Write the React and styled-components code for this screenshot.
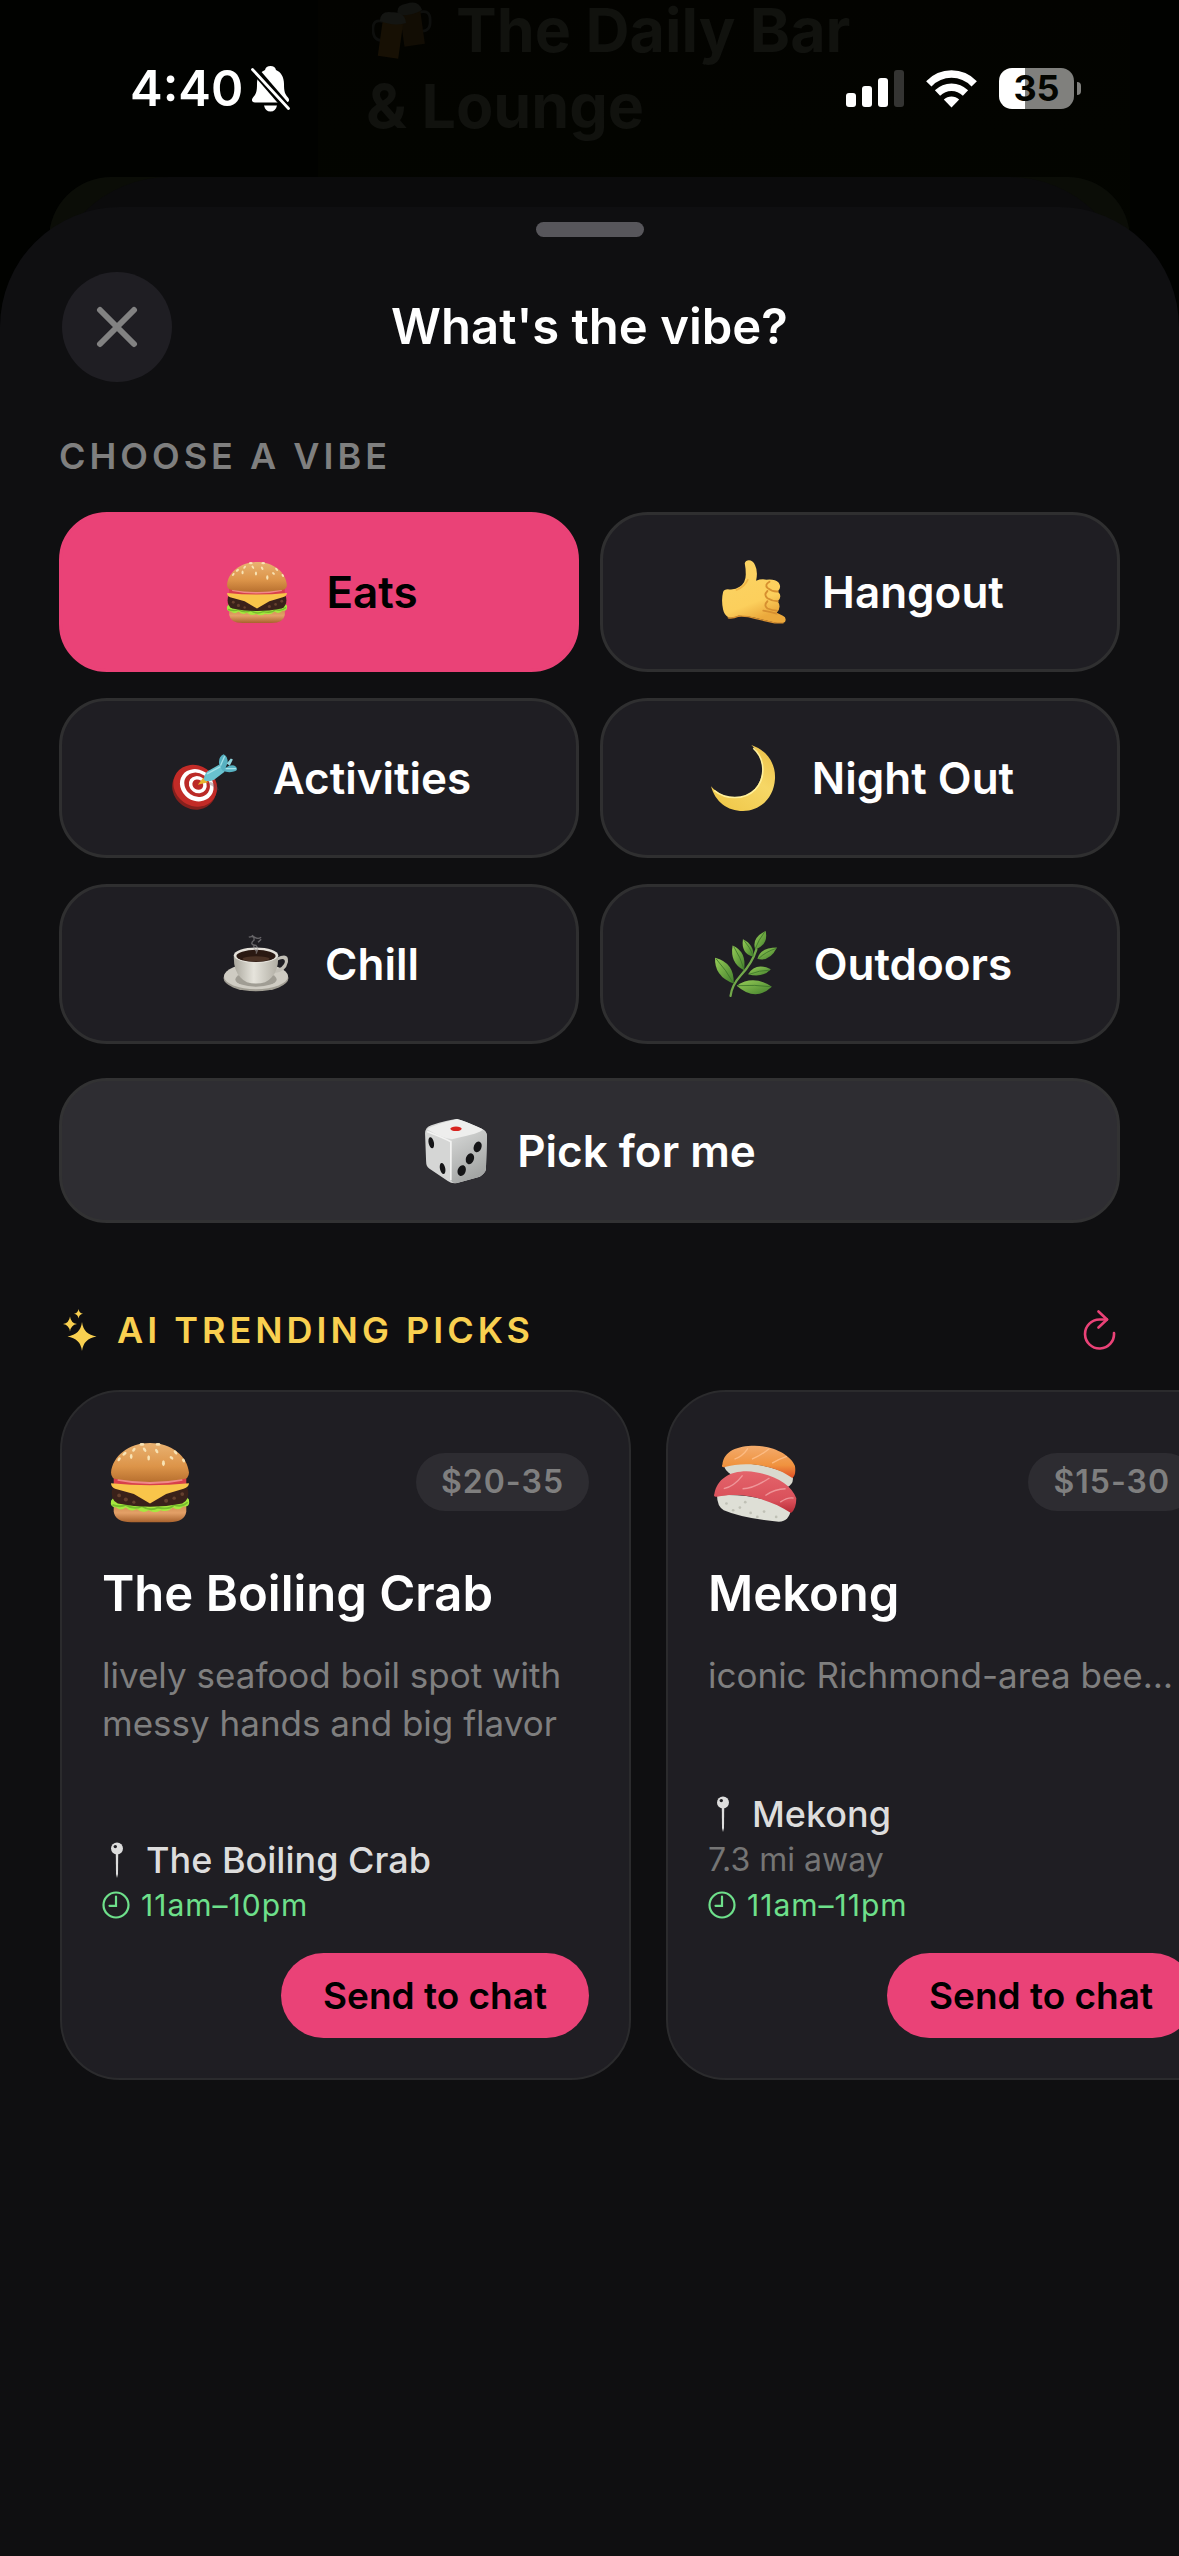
import React from "react";
import styled, { createGlobalStyle } from "styled-components";

const color = {
  sheet: "#0f0f11",
  surface: "#1f1e23",
  raised: "#2e2d32",
  line: "#2f2f30",
  pink: "#ea4277",
  gold: "#f9d050",
  green: "#6ee08b",
  muted: "#7f7f7f",
  soft: "#dddddd",
};

const GlobalStyle = createGlobalStyle`
  *, *::before, *::after { box-sizing: border-box; }
  body {
    margin: 0;
    background: #000;
    color: #fff;
    font-family: Inter, "Liberation Sans", sans-serif;
    -webkit-font-smoothing: antialiased;
  }
  h1, h2, h3, p, ul { margin: 0; padding: 0; }
  button { font: inherit; border: 0; padding: 0; cursor: pointer; color: inherit; }
  svg { display: block; flex: none; }
`;

/* ---------- page shell ---------- */

const Screen = styled.div`
  position: relative;
  display: flex;
  flex-direction: column;
  min-height: 100vh;
  overflow: hidden;
  background: #010200;
`;

const Behind = styled.div`
  position: absolute;
  inset: 0 49px auto 318px;
  display: flex;
  flex-direction: column;
  gap: 16px;
  height: 260px;
  padding-left: 48px;
  background: linear-gradient(#030300, #030500);
  color: #11120e;
  font-size: 61px;
  line-height: 60px;
  font-weight: 700;
`;

const BehindLine = styled.div`
  display: flex;
  align-items: center;
  gap: 24px;
  white-space: nowrap;
  svg { margin-left: 6px; }
`;

const StatusBar = styled.header`
  position: relative;
  display: flex;
  justify-content: space-between;
  align-items: center;
  height: 177px;
  padding: 0 98px 0 130px;
`;

const StatusGroup = styled.div`
  display: flex;
  align-items: center;
  gap: ${(p) => p.$gap}px;
`;

const Clock = styled.time`
  font-size: 49px;
  line-height: 60px;
  font-weight: 600;
`;

const Battery = styled.div`
  display: flex;
  align-items: center;
  gap: 3px;
  &::after {
    content: "";
    width: 4px;
    height: 13px;
    border-radius: 0 6px 6px 0;
    background: #80807d;
  }
`;

const BatteryBody = styled.div`
  width: 75px;
  height: 41px;
  border-radius: 13px;
  background: linear-gradient(90deg, #fff 35%, #80807d 35%);
  color: #040500;
  font-size: 36px;
  line-height: 41px;
  font-weight: 700;
  text-align: center;
`;

const Stack = styled.div`
  position: relative;
  flex: 1;
  display: flex;
  padding-top: 30px;
`;

const Peek = styled.div`
  position: absolute;
  top: 0;
  left: ${(p) => p.$inset}px;
  right: ${(p) => p.$inset}px;
  height: 180px;
  border-radius: ${(p) => p.$radius}px ${(p) => p.$radius}px 0 0;
  background: ${(p) => p.$tone};
`;

const Sheet = styled.main`
  position: relative;
  flex: 1;
  min-width: 0;
  display: flex;
  flex-direction: column;
  padding-top: 15px;
  border-radius: 120px 120px 0 0;
  background: ${color.sheet};
`;

const Handle = styled.div`
  align-self: center;
  width: 108px;
  height: 15px;
  border-radius: 8px;
  background: #57565b;
`;

const TitleBar = styled.div`
  display: grid;
  grid-template-columns: 110px 1fr 110px;
  align-items: center;
  margin: 35px 62px 52px;
`;

const CloseButton = styled.button`
  display: grid;
  place-items: center;
  width: 110px;
  height: 110px;
  border-radius: 50%;
  background: ${color.surface};
`;

const Title = styled.h1`
  font-size: 49px;
  line-height: 60px;
  font-weight: 600;
  text-align: center;
`;

/* ---------- vibes ---------- */

const Section = styled.section`
  display: flex;
  flex-direction: column;
  padding: 0 59px;
`;

const SectionLabel = styled.h2`
  display: flex;
  align-items: center;
  gap: 20px;
  color: ${(p) => p.$tone};
  font-size: 36px;
  line-height: 44px;
  font-weight: 600;
  letter-spacing: 4px;
`;

const VibeGrid = styled.div`
  display: grid;
  grid-template-columns: 1fr 1fr;
  gap: 26px 21px;
  margin: 34px 0;
`;

const VibeButton = styled.button`
  display: flex;
  justify-content: center;
  align-items: center;
  gap: ${(p) => (p.$wide ? 28 : 36)}px;
  height: ${(p) => (p.$wide ? 145 : 160)}px;
  padding-left: ${(p) => (p.$wide ? 0 : 4)}px;
  border: 3px solid ${(p) => (p.$selected ? color.pink : p.$wide ? "#323233" : color.line)};
  border-radius: 48px;
  background: ${(p) => (p.$selected ? color.pink : p.$wide ? color.raised : color.surface)};
  color: ${(p) => (p.$selected ? "#000" : "#fff")};
  font-size: 44px;
  line-height: 56px;
  font-weight: 600;
`;

/* ---------- picks ---------- */

const PicksHeader = styled.div`
  display: flex;
  justify-content: space-between;
  align-items: center;
  margin: 85px 63px 38px;
`;

const IconButton = styled.button`
  display: grid;
  place-items: center;
  height: 44px;
  background: none;
`;

const Carousel = styled.ul`
  display: flex;
  gap: 35px;
  padding: 0 60px;
  overflow-x: auto;
  scrollbar-width: none;
  list-style: none;
`;

const Card = styled.li`
  flex: 0 0 571px;
  display: flex;
  flex-direction: column;
  min-height: 690px;
  padding: 40px;
  border: 2px solid #2b2b2d;
  border-radius: 60px;
  background: ${color.surface};
`;

const CardTop = styled.div`
  display: flex;
  justify-content: space-between;
  align-items: center;
  height: 100px;
  padding-left: 5px;
`;

const Price = styled.span`
  padding: 0 25px;
  border-radius: 29px;
  background: #2d2c31;
  color: ${color.muted};
  font-size: 32px;
  line-height: 58px;
  font-weight: 600;
  letter-spacing: 1px;
`;

const CardTitle = styled.h3`
  margin-top: 32px;
  font-size: 49px;
  line-height: 60px;
  font-weight: 600;
`;

const Blurb = styled.p`
  margin-top: 27px;
  color: ${color.muted};
  font-size: 35px;
  line-height: 48px;
  white-space: pre;
`;

const Meta = styled.div`
  margin-top: auto;
  margin-bottom: 26px;
`;

const Venue = styled.p`
  display: flex;
  align-items: center;
  gap: 23px;
  padding-left: 9px;
  color: ${color.soft};
  font-size: 36px;
  line-height: 46px;
  font-weight: 500;
`;

const Distance = styled.p`
  color: #757575;
  font-size: 32px;
  line-height: 46px;
`;

const Hours = styled.p`
  display: flex;
  align-items: center;
  gap: 11px;
  color: ${color.green};
  font-size: 30px;
  line-height: 44px;
  letter-spacing: 1px;
`;

const SendButton = styled.button`
  align-self: flex-end;
  height: 85px;
  padding: 0 42px;
  border-radius: 43px;
  background: ${color.pink};
  color: #000;
  font-size: 37px;
  line-height: 44px;
  font-weight: 600;
`;

/* ---------- drawings ---------- */

const Art = ({ size = 66, box = 64, children, ...rest }) => (
  <svg width={size} height={size} viewBox={`0 0 ${box} ${box}`} aria-hidden="true" {...rest}>
    {children}
  </svg>
);

const Burger = ({ size }) => (
  <Art size={size}>
    <defs>
      <linearGradient id="bun" x1="0" y1="0" x2="0" y2="1">
        <stop offset="0" stopColor="#e9b271" />
        <stop offset=".6" stopColor="#dc9449" />
        <stop offset="1" stopColor="#b8702f" />
      </linearGradient>
      <linearGradient id="heel" x1="0" y1="0" x2="0" y2="1">
        <stop offset="0" stopColor="#cf8a50" />
        <stop offset=".5" stopColor="#e3a067" />
        <stop offset="1" stopColor="#a9632d" />
      </linearGradient>
    </defs>
    <path d="M5 48H59V54Q58 62 46 62H18Q6 62 5 54Z" fill="url(#heel)" />
    <path d="M3 46Q2 51 7 51Q10 54 14 51Q18 55 22 52Q27 56 31 53Q36 56 40 53Q45 55 49 51Q53 54 57 50Q62 51 61 45L57 41H7Z" fill="#a6e83f" />
    <path d="M4 49Q10 51 14 49Q20 53 26 50Q32 54 38 51Q46 53 50 49Q56 51 60 47" fill="none" stroke="#76bd2c" strokeWidth="1.4" />
    <path d="M4 36H60Q62 45 56 48Q32 53 8 48Q2 45 4 36Z" fill="#3a211a" />
    <g fill="#65402e">
      <circle cx="9" cy="42" r="1.4" /><circle cx="14" cy="45" r="1.5" /><circle cx="20" cy="47" r="1.2" />
      <circle cx="44" cy="46" r="1.5" /><circle cx="50" cy="44" r="1.3" /><circle cx="56" cy="41" r="1.4" />
    </g>
    <path d="M5 27H59V34Q32 39 5 34Z" fill="#d8404b" />
    <path d="M8 30Q32 35 56 30" fill="none" stroke="#f08a88" strokeWidth="2" />
    <path d="M3 33Q32 36 61 33Q61 36 57 37L44 41L32 48L20 41L6 37Q3 36 3 33Z" fill="#f9c54a" />
    <path d="M32 3C48 3 60 13 61 25Q61 30 56 30Q32 34 8 30Q3 30 3 25C4 13 16 3 32 3Z" fill="url(#bun)" />
    <g fill="#f8e3b4">
      <ellipse cx="26" cy="4" rx="1.8" ry="1" /><ellipse cx="38" cy="4" rx="1.8" ry="1" />
      <ellipse cx="28" cy="8" rx="1" ry="1.8" transform="rotate(-35 28 8)" />
      <ellipse cx="37" cy="9" rx="1" ry="1.8" transform="rotate(-30 37 9)" />
      <ellipse cx="20" cy="8" rx="1" ry="1.7" transform="rotate(35 20 8)" />
      <ellipse cx="13" cy="11" rx="1" ry="1.8" transform="rotate(50 13 11)" />
      <ellipse cx="18" cy="13" rx="1" ry="1.8" /><ellipse cx="31" cy="14" rx="1" ry="2" />
      <ellipse cx="42" cy="18" rx="1.1" ry="2.2" /><ellipse cx="51" cy="10" rx="1" ry="1.8" transform="rotate(-40 51 10)" />
      <ellipse cx="9" cy="15" rx="1" ry="1.6" transform="rotate(35 9 15)" />
      <ellipse cx="48" cy="14" rx="1" ry="1.6" transform="rotate(-50 48 14)" />
      <ellipse cx="57" cy="16" rx="1" ry="1.6" transform="rotate(-30 57 16)" />
    </g>
  </Art>
);

const Shaka = () => (
  <Art>
    <defs>
      <linearGradient id="hand" x1="0" y1="0" x2=".4" y2="1">
        <stop offset="0" stopColor="#fbd465" />
        <stop offset=".75" stopColor="#fccf5c" />
        <stop offset="1" stopColor="#eba93c" />
      </linearGradient>
    </defs>
    <path d="M24 4C25 0 32 0 34 6Q37 12 35 21Q40 19 45 20Q53 19 57 23Q60 28 56 31.500Q61 36 56 41Q60 47 55 52L61 55Q65 57 63 61Q60 63 53 61.500L34 57Q26 55 18 55Q12 58 8 56.500Q4 54 3 49Q1 40 3 32Q4 29 9 29.500Q15 30 19 27Q25 23 25 15Q25 9 24 4Z" fill="url(#hand)" />
    <g fill="none" stroke="#d68f30" strokeWidth="1.800" strokeLinecap="round">
      <path d="M48 22Q43 25 46 28Q51 32 56 31.500" />
      <path d="M46 31Q42 35 46 38Q51 41 56 41" />
      <path d="M46 41Q42 45 46 48Q51 50 55 50" />
      <path d="M42 50Q48 51 55 53" />
      <path d="M8 57Q12 58 18 55.500Q26 55 34 57.500L53 62H61" strokeWidth="1.300" />
      <path d="M27 20Q24 27 16 30" stroke="#eeb345" strokeWidth="1.500" />
    </g>
  </Art>
);

const Dart = () => (
  <Art>
    <ellipse cx="22.500" cy="42" rx="22" ry="20" transform="rotate(35 22.500 42)" fill="#85201d" />
    <ellipse cx="23.500" cy="39.500" rx="22" ry="19.500" transform="rotate(35 23.500 39.500)" fill="#c22b27" />
    <g transform="rotate(35 25 39)">
      <ellipse cx="25" cy="39" rx="17" ry="15" fill="#fff" />
      <ellipse cx="25" cy="38.500" rx="13" ry="11.200" fill="#bb2a27" />
      <ellipse cx="25.500" cy="38" rx="9" ry="8" fill="#fff" />
      <ellipse cx="25.500" cy="38" rx="5.500" ry="4.800" fill="#bb2a27" />
    </g>
    <path d="M37 37Q43 38 45 44" fill="none" stroke="#6d3d48" strokeWidth="3" opacity=".35" />
    <path d="M26 38.500L31 32L36 36Z" fill="#e9b52f" />
    <path d="M32 32Q33 26 38 24L47 19L52 26L44 32Q40 36 36 35Q31 35 32 32Z" fill="#69c2cf" />
    <path d="M47 20Q45 12 51 9Q55 11 55 17L53 22Q59 18 63 21Q66 25 60 26Q55 27 50 25Z" fill="#57b1c1" />
    <path d="M54 18L58 13L60 14L57 20Z" fill="#8fd3dc" />
    <path d="M35 28L48 21M48 20L52 11M53 23L63 23" stroke="#a5e3e9" strokeWidth="1.200" />
  </Art>
);

const Moon = () => (
  <Art>
    <defs>
      <linearGradient id="moon" x1="1" y1="0" x2=".3" y2="1">
        <stop offset="0" stopColor="#ecbf45" />
        <stop offset=".5" stopColor="#f6d766" />
        <stop offset="1" stopColor="#f0c94c" />
      </linearGradient>
    </defs>
    <path d="M40 0C55 5 64 18 63 33C62 51 49 64 32 64C17 64 5 55 1 40C13 54 33 55 44 42C54 30 53 12 40 0Z" fill="url(#moon)" />
    <path d="M42 3C54 14 54 32 44 43C33 54 15 53 4 44" fill="none" stroke="#fff09a" strokeWidth="1.5" />
  </Art>
);

const Cup = () => (
  <Art>
    <defs>
      <linearGradient id="china" x1="0" y1="0" x2="1" y2="0">
        <stop offset="0" stopColor="#aaa79d" />
        <stop offset=".45" stopColor="#e6e4dc" />
        <stop offset="1" stopColor="#b0ada3" />
      </linearGradient>
    </defs>
    <ellipse cx="32" cy="45.500" rx="31.500" ry="13" fill="#a19e94" />
    <ellipse cx="32" cy="44" rx="31" ry="12.500" fill="#cfccc3" />
    <ellipse cx="32" cy="47" rx="20" ry="7" fill="#a09d94" />
    <path d="M52 26Q64 20 63 30Q61 40 49 41L50 38Q59 35 60 30Q60 25 52 29Z" fill="#c2bfb6" />
    <path d="M10.500 24Q10 38 17 45Q22 51 32 51Q42 51 47 45Q54 38 53.500 24Z" fill="url(#china)" />
    <ellipse cx="32" cy="23.500" rx="21.500" ry="7.500" fill="#e4e1da" />
    <ellipse cx="32" cy="24.200" rx="19" ry="5.900" fill="#2a1912" />
    <ellipse cx="32" cy="27" rx="13" ry="2.600" fill="#4a3225" />
    <path d="M25 6Q31 4 30 9Q25 13 32 14Q35 17 32 22M28 4Q33 9 37 6M30 13Q29 17 33 20M34 11L37 8" fill="none" stroke="#a2a0a2" strokeWidth="1.300" opacity=".55" />
  </Art>
);

const Herb = () => (
  <Art>
    <defs>
      <linearGradient id="leaf" x1="0" y1="0" x2="1" y2="1">
        <stop offset="0" stopColor="#97ce58" />
        <stop offset="1" stopColor="#427f2c" />
      </linearGradient>
    </defs>
    <path d="M18 63Q19 53 28 43Q39 31 43 18" fill="none" stroke="#72a94a" strokeWidth="2.200" strokeLinecap="round" />
    <g fill="url(#leaf)">
      <path d="M52 0Q55 13 42 18Q38 7 52 0Z" /><path d="M30 8Q41 13 40 25Q28 22 30 8Z" />
      <path d="M63 16Q56 30 44 27Q47 16 63 16Z" /><path d="M20 14Q34 20 31 38Q17 31 20 14Z" />
      <path d="M57 37Q49 46 35 42Q42 30 57 37Z" /><path d="M3 26Q22 31 21 51Q2 44 3 26Z" />
      <path d="M58 54Q42 69 24 53Q40 42 58 54Z" />
    </g>
    <g fill="none" stroke="#3c7429" strokeWidth=".8">
      <path d="M4 27Q14 38 21 51M21 15Q28 26 31 37M31 9Q37 16 40 24M51 1Q45 9 42 17M62 17Q52 20 45 27M56 38Q46 38 36 42M57 54Q42 52 25 53" />
    </g>
  </Art>
);

const Die = () => (
  <Art>
    <defs>
      <linearGradient id="dieRight" x1="0" y1="0" x2=".4" y2="1">
        <stop offset="0" stopColor="#d8d9d8" />
        <stop offset="1" stopColor="#a3a5a4" />
      </linearGradient>
    </defs>
    <path d="M33 1Q38 2 58 11Q62 13 62 18L61 50Q60 54 55 57L33 63Q28 64 24 61L6 49Q3 47 3 42L2 15Q2 9 8 7Q24 2 33 1Z" fill="#d5d6d5" />
    <path d="M28 22Q30 19 36 18L58 12Q62 13 62 18L61 50Q60 54 55 57L33 63Q27 64 27 58Z" fill="url(#dieRight)" />
    <path d="M4 11Q9 7 33 1Q44 4 58 11Q56 15 30 20Q22 22 4 11Z" fill="#eeeeed" />
    <path d="M4 13Q22 20 27 23L27 60" fill="none" stroke="#f3f3f2" strokeWidth="1.600" />
    <ellipse cx="32" cy="10.500" rx="5.500" ry="2.200" fill="#d8241f" />
    <g fill="#151517">
      <ellipse cx="8" cy="24" rx="2.600" ry="5.400" transform="rotate(-12 8 24)" />
      <ellipse cx="19" cy="49" rx="2.600" ry="5.400" transform="rotate(-12 19 49)" />
      <ellipse cx="53" cy="28" rx="3.700" ry="5.400" transform="rotate(20 53 28)" />
      <ellipse cx="45.500" cy="39.500" rx="3.900" ry="5.400" transform="rotate(20 45.500 39.500)" />
      <ellipse cx="37.500" cy="51" rx="3.900" ry="5.400" transform="rotate(20 37.500 51)" />
    </g>
  </Art>
);

const Sushi = ({ size }) => (
  <Art size={size}>
    <defs>
      <linearGradient id="salmon" x1="0" y1="0" x2="0" y2="1">
        <stop offset="0" stopColor="#f3ab6c" />
        <stop offset=".6" stopColor="#f0933f" />
        <stop offset="1" stopColor="#df4f24" />
      </linearGradient>
      <linearGradient id="tuna" x1="0" y1="0" x2="0" y2="1">
        <stop offset="0" stopColor="#e4646b" />
        <stop offset=".7" stopColor="#d9505a" />
        <stop offset="1" stopColor="#b82c37" />
      </linearGradient>
    </defs>
    <path d="M8 19Q32 15 59 27Q61 33 55 36L20 29Q9 26 8 19Z" fill="#d9d9ce" />
    <path d="M7 19C8 9 18 5 31 5C45 5 58 12 61 20Q62 27 59 29C47 20 26 16 8 21Q6 21 7 19Z" fill="url(#salmon)" />
    <path d="M3 42Q32 40 58 52Q57 61 49 61.500Q22 59 8 53Q3 50 3 42Z" fill="#dedfd6" />
    <g fill="#bfc0b5">
      <circle cx="10" cy="48" r="1" /><circle cx="20" cy="51" r="1" /><circle cx="28" cy="55" r="1" />
      <circle cx="38" cy="54" r="1" /><circle cx="47" cy="58" r="1" /><circle cx="15" cy="53" r="1" />
      <circle cx="33" cy="58" r="1" /><circle cx="24" cy="47" r="1" /><circle cx="50" cy="34" r="1" />
    </g>
    <path d="M1 41C3 30 12 24 25 24C43 25 58 33 62 44Q62 52 58 55C43 45 22 39 3 43Q0 43 1 41Z" fill="url(#tuna)" />
    <g fill="none" stroke="#ffc28d" strokeWidth="1" opacity=".8">
      <path d="M16 15Q22 13 26 7M29 15Q36 12 42 7M44 18Q49 15 55 13" />
    </g>
    <g fill="none" stroke="#f3a5a8" strokeWidth="1" opacity=".8">
      <path d="M8 37Q16 35 22 27M22 37Q30 37 42 29M39 42Q46 37 54 37M50 47Q56 43 60 44" />
    </g>
  </Art>
);

const Beers = () => (
  <Art size={60}>
    <g transform="rotate(-8 46 30)">
      <path d="M52 14Q65 12 63 24Q62 36 52 34" fill="none" stroke="#0e0f0d" strokeWidth="3" />
      <path d="M32 12H54V48H32Z" fill="#120d04" />
      <path d="M30 14Q28 3 40 3Q54 0 56 12Q45 17 30 14Z" fill="#121310" />
    </g>
    <g transform="rotate(8 18 40)">
      <path d="M10 24Q-2 22 0 34Q2 46 12 44" fill="none" stroke="#0e0f0d" strokeWidth="3" />
      <path d="M9 24H31V61H9Z" fill="#171004" />
      <path d="M6 24Q5 13 17 13Q31 10 34 22Q22 28 6 24Z" fill="#141512" />
    </g>
  </Art>
);

const BellOff = () => (
  <svg width="39" height="46" viewBox="0 0 39 46" aria-hidden="true">
    <defs>
      <mask id="slash">
        <rect width="39" height="46" fill="#fff" />
        <path d="M1 1L39 45" stroke="#000" strokeWidth="8" />
      </mask>
    </defs>
    <g fill="#fff" mask="url(#slash)">
      <path d="M19.500 0C22.500 0 24.500 1.500 25 4C30 6 33 11 33 18C33 26 34 28 37 31.500C39 34 38 36.500 35 36.500H4C1 36.500 0 34 2 31.500C5 28 6 26 6 18C6 11 9 6 14 4C14.500 1.500 16.500 0 19.500 0Z" />
      <path d="M13 39.500H26C25 43.500 23 45.500 19.500 45.500C16 45.500 14 43.500 13 39.500Z" />
    </g>
    <path d="M1.500 3.500L37.500 42.500" stroke="#fff" strokeWidth="2.800" strokeLinecap="round" />
  </svg>
);

const Signal = () => (
  <svg width="58" height="38" viewBox="0 0 58 38" aria-hidden="true">
    <rect x="0" y="23" width="10" height="14" rx="3" fill="#fff" />
    <rect x="16" y="16" width="10" height="21" rx="3" fill="#fff" />
    <rect x="32" y="8" width="10" height="29" rx="3" fill="#fff" />
    <rect x="48" y="0" width="10" height="37" rx="3" fill="#343432" />
  </svg>
);

const Wifi = () => (
  <svg width="51" height="38" viewBox="0 0 51 38" aria-hidden="true">
    <g fill="none" stroke="#fff" strokeWidth="7.500">
      <path d="M2.800 13.800C15.500 .8 35.500 .8 48.200 13.800" />
      <path d="M11.500 23C19.500 15.200 31.500 15.200 39.500 23" />
    </g>
    <path d="M17.800 29.500C22 25.500 29 25.500 33.200 29.500L25.500 37.500Z" fill="#fff" />
  </svg>
);

const Cross = () => (
  <svg width="42" height="42" viewBox="0 0 42 42" aria-hidden="true">
    <path d="M4 4L38 38M38 4L4 38" stroke="#828282" strokeWidth="6" strokeLinecap="round" />
  </svg>
);

const Sparkles = () => (
  <svg width="34" height="42" viewBox="0 0 34 42" fill={color.gold} aria-hidden="true">
    <path d="M19 13Q20.500 25.500 33.500 27.500Q20.500 29.500 19 42Q17.500 29.500 4.500 27.500Q17.500 25.500 19 13Z" />
    <path d="M7 7.500Q7.800 14 14 15Q7.800 16 7 22.500Q6.200 16 0 15Q6.200 14 7 7.500Z" />
    <path d="M15.500 0Q16 4 20 4.700Q16 5.400 15.500 9.500Q15 5.400 11 4.700Q15 4 15.500 0Z" />
  </svg>
);

const Refresh = () => (
  <svg width="33" height="40" viewBox="0 0 33 40" fill="none" stroke={color.pink} strokeWidth="2.600" strokeLinecap="round" strokeLinejoin="round" aria-hidden="true">
    <path d="M31 23A14.500 14.500 0 1 1 16.500 9.500H24" />
    <path d="M15.500 1.500L24 9.500L15.500 17.500" />
  </svg>
);

const Pin = () => (
  <svg width="12" height="36" viewBox="0 0 12 36" aria-hidden="true">
    <path d="M4.800 11H7.200L7 32L6 36L5 32Z" fill={color.soft} />
    <circle cx="6" cy="6.500" r="6" fill={color.soft} />
    <circle cx="4.300" cy="4.600" r="1.700" fill={color.surface} />
  </svg>
);

const ClockIcon = () => (
  <svg width="28" height="28" viewBox="0 0 28 28" fill="none" stroke={color.green} strokeWidth="2.200" strokeLinecap="round" aria-hidden="true">
    <circle cx="14" cy="14" r="12.500" />
    <path d="M14 5.500V14.800H7.500" />
  </svg>
);

/* ---------- content ---------- */

const vibes = [
  { name: "Eats", Icon: Burger },
  { name: "Hangout", Icon: Shaka },
  { name: "Activities", Icon: Dart },
  { name: "Night Out", Icon: Moon },
  { name: "Chill", Icon: Cup },
  { name: "Outdoors", Icon: Herb },
];

const picks = [
  {
    name: "The Boiling Crab",
    Icon: Burger,
    price: "$20-35",
    blurb: "lively seafood boil spot with\nmessy hands and big flavor",
    hours: "11am–10pm",
  },
  {
    name: "Mekong",
    Icon: Sushi,
    price: "$15-30",
    blurb: "iconic Richmond-area bee…",
    distance: "7.3 mi away",
    hours: "11am–11pm",
  },
];

export default function App() {
  const [vibe, setVibe] = React.useState("Eats");
  const pickRandom = () => setVibe(vibes[Math.floor(Math.random() * vibes.length)].name);

  return (
    <>
      <GlobalStyle />
      <Screen>
        <Behind aria-hidden="true">
          <BehindLine><Beers />The Daily Bar</BehindLine>
          <BehindLine>&amp; Lounge</BehindLine>
        </Behind>

        <StatusBar>
          <StatusGroup $gap={8}>
            <Clock>4:40</Clock>
            <BellOff />
          </StatusGroup>
          <StatusGroup $gap={22}>
            <Signal />
            <Wifi />
            <Battery><BatteryBody>35</BatteryBody></Battery>
          </StatusGroup>
        </StatusBar>

        <Stack>
          <Peek $inset={49} $radius={62} $tone="#0b0d07" />
          <Peek $inset={49} $radius={120} $tone="#0b0b0c" />
          <Sheet>
            <Handle />
            <TitleBar>
              <CloseButton aria-label="Close"><Cross /></CloseButton>
              <Title>What's the vibe?</Title>
            </TitleBar>

            <Section>
              <SectionLabel $tone={color.muted}>CHOOSE A VIBE</SectionLabel>
              <VibeGrid>
                {vibes.map(({ name, Icon }) => (
                  <VibeButton
                    key={name}
                    $selected={name === vibe}
                    aria-pressed={name === vibe}
                    onClick={() => setVibe(name)}
                  >
                    <Icon />
                    {name}
                  </VibeButton>
                ))}
              </VibeGrid>
              <VibeButton $wide onClick={pickRandom}>
                <Die />
                Pick for me
              </VibeButton>
            </Section>

            <PicksHeader>
              <SectionLabel $tone={color.gold}><Sparkles />AI TRENDING PICKS</SectionLabel>
              <IconButton aria-label="Refresh picks"><Refresh /></IconButton>
            </PicksHeader>

            <Carousel>
              {picks.map(({ name, Icon, price, blurb, distance, hours }) => (
                <Card key={name}>
                  <CardTop>
                    <Icon size={86} />
                    <Price>{price}</Price>
                  </CardTop>
                  <CardTitle>{name}</CardTitle>
                  <Blurb>{blurb}</Blurb>
                  <Meta>
                    <Venue><Pin />{name}</Venue>
                    {distance && <Distance>{distance}</Distance>}
                    <Hours><ClockIcon />{hours}</Hours>
                  </Meta>
                  <SendButton>Send to chat</SendButton>
                </Card>
              ))}
            </Carousel>
          </Sheet>
        </Stack>
      </Screen>
    </>
  );
}
